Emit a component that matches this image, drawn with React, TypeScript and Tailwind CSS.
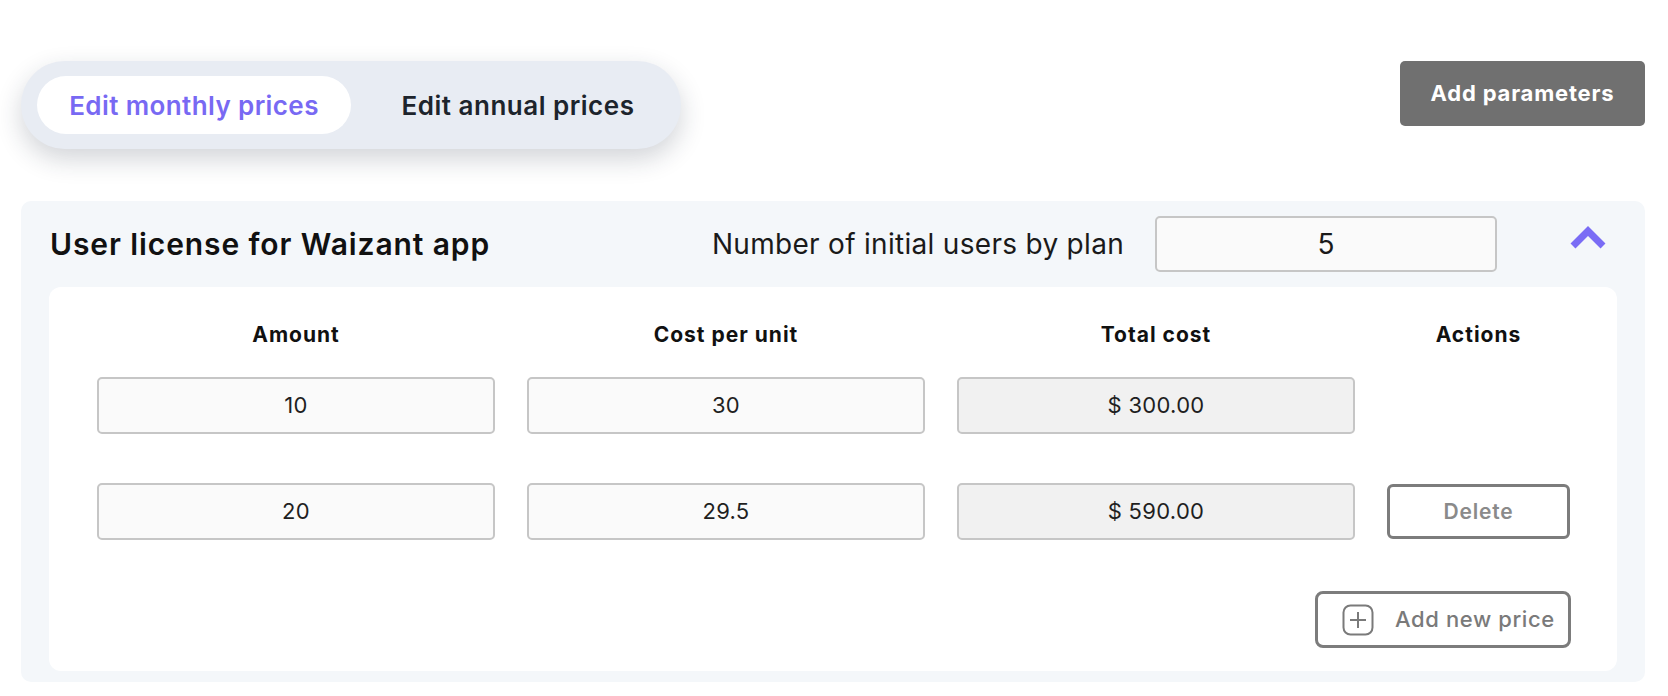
import React from "react";

const font = { fontFamily: "Inter, 'Noto Sans', sans-serif" };

function Field({ value, muted }: { value: string; muted?: boolean }) {
  return (
    <div
      className={`h-[57px] rounded-[5px] border-2 border-[#c6c6c6] flex items-center justify-center text-[22px] tracking-[0.3px] text-[#1f1f1f] ${
        muted ? "bg-[#f1f1f1]" : "bg-[#fafafa]"
      }`}
    >
      {value}
    </div>
  );
}

export default function App() {
  return (
    <div style={font} className="w-[1668px] h-[696px] bg-white pl-[21px] pr-[23px] pt-[61px]">
      <div className="flex items-start justify-between">
        <div className="w-[660px] h-[88px] rounded-full bg-[#e8ecf3] shadow-[0_10px_26px_rgba(30,40,60,0.2)] flex items-center pl-[16px]">
          <div className="w-[314px] h-[58px] rounded-full bg-white flex items-center justify-center text-[26px] font-semibold text-[#7869f3] tracking-[0.4px]">
            Edit monthly prices
          </div>
          <div className="flex-1 flex items-center justify-center text-[26px] font-semibold text-[#1d242c] tracking-[0.5px] pl-[4px]">
            Edit annual prices
          </div>
        </div>
        <button className="w-[245px] h-[65px] rounded-[5px] bg-[#707070] text-white text-[22px] font-bold tracking-[0.8px]">
          Add parameters
        </button>
      </div>

      <div className="mt-[52px] rounded-[10px] bg-[#f4f7fa] px-[28px] pt-[15px] pb-[11px]">
        <div className="flex items-center h-[56px]">
          <div className="pl-[1px] text-[30px] font-semibold text-[#111] tracking-[0.9px]">User license for Waizant app</div>
          <div className="ml-auto text-[28px] text-[#1a1a1a] tracking-[0.3px]">Number of initial users by plan</div>
          <div className="ml-[31px] w-[342px] h-[56px] rounded-[5px] border-2 border-[#c6c6c6] bg-[#fafafa] flex items-center justify-center text-[28px] text-[#1a1a1a]">
            5
          </div>
          <div className="ml-[72px] mr-[10px] mb-[14px] w-[38px] h-[26px] flex items-center justify-center">
            <svg width="38" height="26" viewBox="0 0 38 26">
              <polyline points="4,22 19,7 34,22" fill="none" stroke="#7a6cf5" strokeWidth="7" strokeLinejoin="miter" />
            </svg>
          </div>
        </div>

        <div className="mt-[15px] rounded-[12px] bg-white pl-[48px] pr-[49px] pt-[36px] pb-[23px]">
          <div className="grid grid-cols-[398px_398px_398px_183px] gap-x-[32px] text-[21px] font-bold text-[#111] text-center leading-[24px] tracking-[1px]">
            <div>Amount</div>
            <div>Cost per unit</div>
            <div>Total cost</div>
            <div>Actions</div>
          </div>
          <div className="mt-[30px] grid grid-cols-[398px_398px_398px_183px] gap-x-[32px]">
            <Field value="10" />
            <Field value="30" />
            <Field value="$ 300.00" muted />
            <div />
          </div>
          <div className="mt-[49px] grid grid-cols-[398px_398px_398px_183px] gap-x-[32px] items-center">
            <Field value="20" />
            <Field value="29.5" />
            <Field value="$ 590.00" muted />
            <button className="h-[55px] rounded-[6px] border-[3px] border-[#7c7c7c] bg-white text-[21px] font-semibold text-[#8a8a8a] tracking-[0.8px]">
              Delete
            </button>
          </div>
          <div className="mt-[51px] flex justify-end">
            <button className="-mr-[3px] w-[256px] h-[57px] rounded-[8px] border-[3px] border-[#7c7c7c] bg-white flex items-center pl-[24px] text-[22px] font-medium text-[#7a7a7a] tracking-[0.6px]">
              <svg width="32" height="32" viewBox="0 0 32 32" className="mr-[21px]">
                <rect x="1.5" y="1.5" width="29" height="29" rx="7" fill="none" stroke="#7a7a7a" strokeWidth="2" />
                <path d="M16 8v16M8 16h16" stroke="#7a7a7a" strokeWidth="2" />
              </svg>
              Add new price
            </button>
          </div>
        </div>
      </div>
    </div>
  );
}
